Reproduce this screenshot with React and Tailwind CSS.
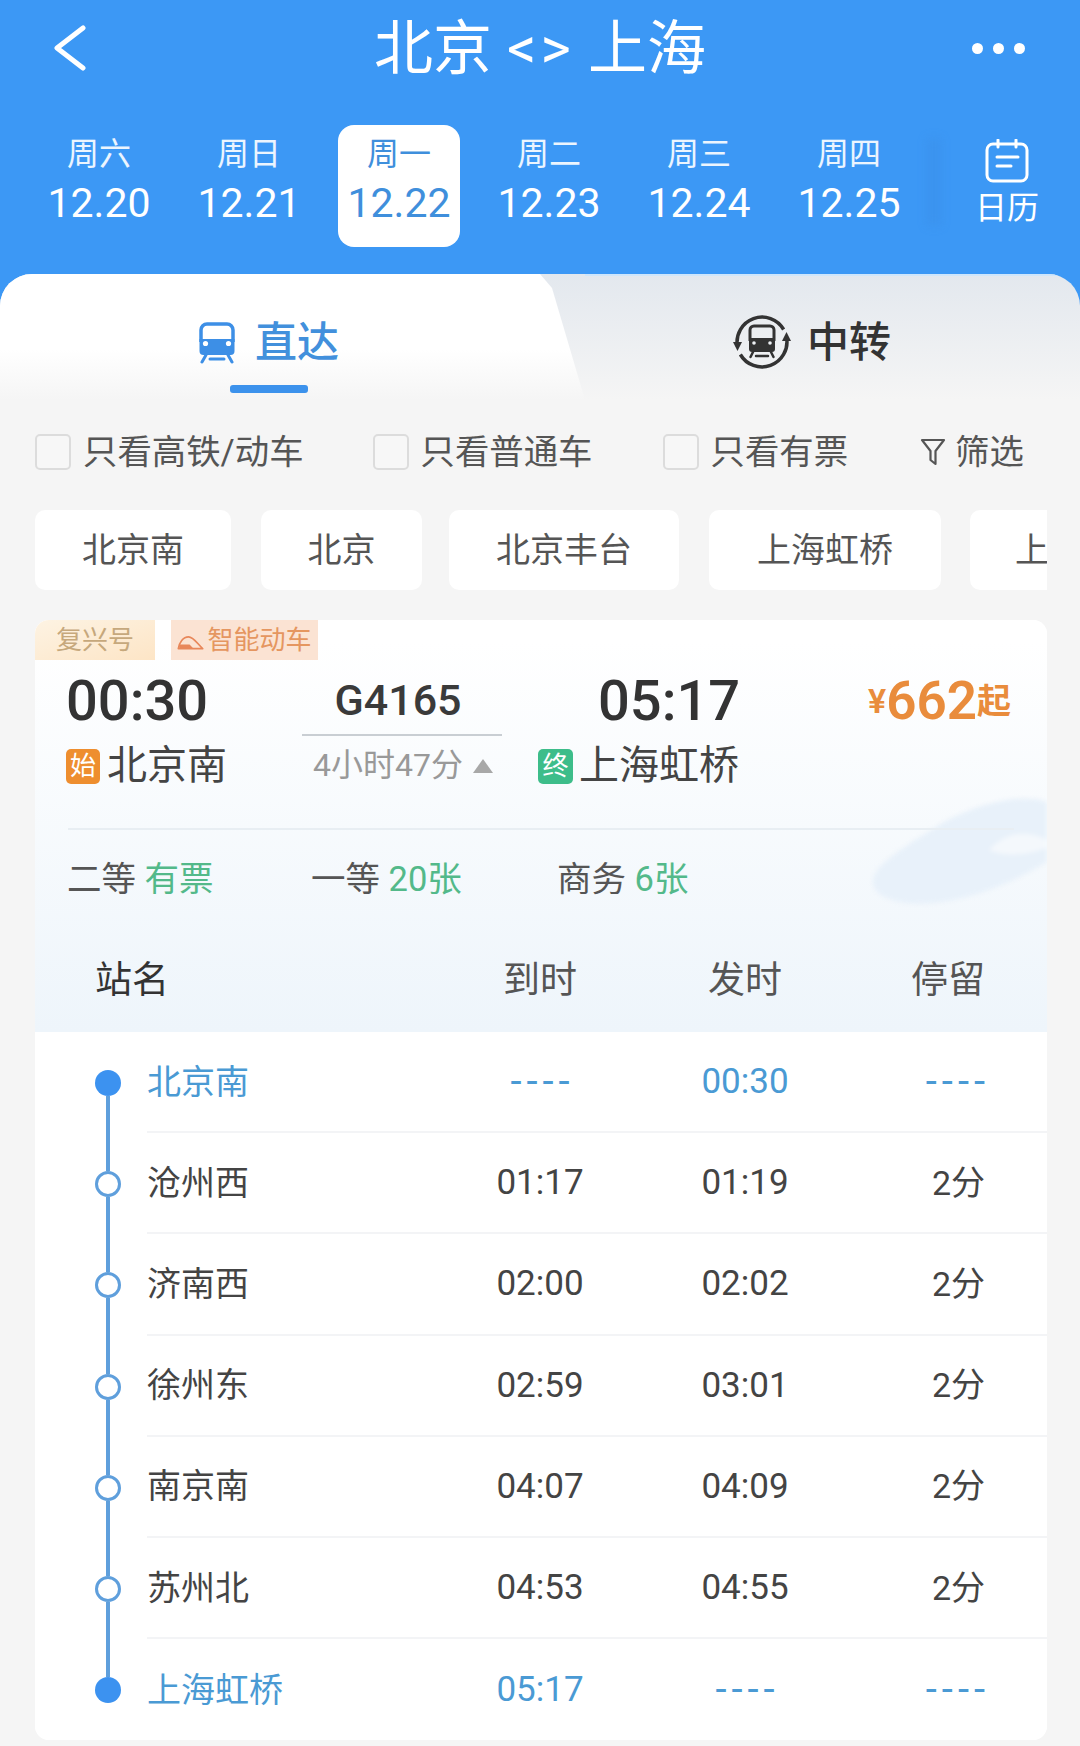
const days = [
  ['周六', '12.20'],
  ['周日', '12.21'],
  ['周一', '12.22', true],
  ['周二', '12.23'],
  ['周三', '12.24'],
  ['周四', '12.25'],
]

const stops = [
  { name: '北京南', arrive: '----', leave: '00:30', stay: '----', end: true },
  { name: '沧州西', arrive: '01:17', leave: '01:19', stay: '2分' },
  { name: '济南西', arrive: '02:00', leave: '02:02', stay: '2分' },
  { name: '徐州东', arrive: '02:59', leave: '03:01', stay: '2分' },
  { name: '南京南', arrive: '04:07', leave: '04:09', stay: '2分' },
  { name: '苏州北', arrive: '04:53', leave: '04:55', stay: '2分' },
  { name: '上海虹桥', arrive: '05:17', leave: '----', stay: '----', end: true },
]

function TrainIcon({ className, color }) {
  return (
    <svg viewBox="0 0 38 42" className={className} fill="none">
      <path d="M3 20V8a6 6 0 0 1 6-6h20a6 6 0 0 1 6 6v12" stroke={color} strokeWidth="3.5" />
      <path d="M1.5 17h35v12a4 4 0 0 1-4 4h-27a4 4 0 0 1-4-4z" fill={color} />
      <circle cx="7.5" cy="21.5" r="2.6" fill="#fff" />
      <circle cx="30.5" cy="21.5" r="2.6" fill="#fff" />
      <path d="M8 33l-4 7M30 33l4 7M12 37h14" stroke={color} strokeWidth="3" strokeLinecap="round" />
    </svg>
  )
}

function TransferIcon({ className }) {
  return (
    <svg viewBox="0 0 58 58" className={className} fill="none">
      <path d="M4.4 33.3A25 25 0 0 1 50.65 16.5" stroke="#333" strokeWidth="3.5" />
      <path d="M53.6 24.7A25 25 0 0 1 7.35 41.5" stroke="#333" strokeWidth="3.5" />
      <path d="M0 29h9l-4.5 9z" fill="#333" />
      <path d="M49 28h9l-4.5-9z" fill="#333" />
      <path d="M17 28V17a4 4 0 0 1 4-4h16a4 4 0 0 1 4 4v11" stroke="#333" strokeWidth="3" />
      <path d="M16 25h26v11a3 3 0 0 1-3 3H19a3 3 0 0 1-3-3z" fill="#333" />
      <circle cx="21" cy="30" r="1.8" fill="#eef1f5" />
      <circle cx="37" cy="30" r="1.8" fill="#eef1f5" />
      <path d="M20 39l-2.5 5M38 39l2.5 5M23 43h12" stroke="#333" strokeWidth="2.5" strokeLinecap="round" />
    </svg>
  )
}

function Dot({ filled, first, last }) {
  return (
    <div className="w-[26px] h-full shrink-0 flex flex-col items-center">
      <div className={`w-[4px] h-[38px] shrink-0 ${first ? 'bg-transparent' : 'bg-[#5f9fdc]'}`} />
      <div
        className={`w-[26px] h-[26px] shrink-0 rounded-full ${
          filled ? 'bg-[#3c92f0]' : 'bg-white border-[3px] border-[#5f9fdc]'
        }`}
      />
      <div className={`w-[4px] flex-1 ${last ? 'bg-transparent' : 'bg-[#5f9fdc]'}`} />
    </div>
  )
}

function Check({ className, children }) {
  return (
    <div className={`flex items-center ${className}`}>
      <div className="w-[36px] h-[36px] rounded-[5px] border-2 border-[#dcdcdc] bg-[#f7f7f7]" />
      <span className="ml-[12px] text-[34.4px] text-[#555]">{children}</span>
    </div>
  )
}

function Cell({ value, className }) {
  const dashes = value === '----'
  return <span className={`${className} ${dashes ? 'tracking-[5px] text-[40px]' : ''}`}>{value}</span>
}

export default function App() {
  return (
    <div className="w-[1080px] h-[1746px] overflow-hidden bg-[#f5f5f5] leading-none font-[Roboto,'Noto_Sans_CJK_SC',sans-serif]">
      {/* Blue header */}
      <div className="h-[307px] bg-[#3c98f5] text-white">
        <div className="h-[96px] flex items-center justify-between pl-[52px] pr-[55px]">
          <svg viewBox="0 0 34 46" className="w-[34px] h-[46px]" fill="none">
            <path d="M31 3L5 23l26 20" stroke="#fff" strokeWidth="5" strokeLinecap="round" strokeLinejoin="round" />
          </svg>
          <div className="flex items-center text-[59px] ml-[22px]">
            <span>北京</span>
            <span className="ml-[15px] mr-[13px] text-[58px] tracking-[4px]">&lt;&gt;</span>
            <span>上海</span>
          </div>
          <div className="flex gap-[10px]">
            <div className="w-[11px] h-[11px] rounded-full bg-white" />
            <div className="w-[11px] h-[11px] rounded-full bg-white" />
            <div className="w-[11px] h-[11px] rounded-full bg-white" />
          </div>
        </div>

        <div className="flex mt-[29px] pl-[24px]">
          {days.map(([week, date, active]) => (
            <div key={date} className="w-[150px] flex justify-center">
              <div
                className={`w-[122px] h-[122px] rounded-[16px] flex flex-col items-center pt-[13px] ${
                  active ? 'bg-white text-[#3f8fdc]' : ''
                }`}
              >
                <span className={`text-[32px] h-[32px] ${active ? 'text-[#3f8fdc]' : 'text-white/90'}`}>{week}</span>
                <span className="text-[41px] mt-[13px] whitespace-nowrap">{date}</span>
              </div>
            </div>
          ))}
          <div className="w-[12px] h-[86px] mt-[14px] ml-[4px] bg-[#3a90ea]/60 blur-[5px]" />
          <div className="flex flex-col items-center ml-[35px] pt-[14px]">
            <svg viewBox="0 0 44 44" className="w-[44px] h-[44px]" fill="none">
              <rect x="2" y="5" width="40" height="37" rx="6" stroke="#fff" strokeWidth="3" />
              <path d="M13 1v7M31 1v7" stroke="#fff" strokeWidth="3" strokeLinecap="round" />
              <path d="M12 18h21M12 27h14" stroke="#fff" strokeWidth="3" strokeLinecap="round" />
            </svg>
            <span className="text-[32px] mt-[9px] whitespace-nowrap">日历</span>
          </div>
        </div>
      </div>

      {/* Direct / transfer tabs */}
      <div className="-mt-[33px] h-[126px] flex rounded-t-[32px] overflow-hidden bg-gradient-to-b from-[#e3e8ee] to-[#f5f5f5]">
        <div className="w-[585px] shrink-0 flex flex-col items-center [clip-path:polygon(0_0,540px_0,552px_14px,585px_100%,0_100%)] bg-gradient-to-b from-white from-60% to-[#f5f5f5]">
          <div className="flex items-center mt-[48px] mr-[48px]">
            <TrainIcon className="w-[38px] h-[42px]" color="#3d8fe6" />
            <span className="ml-[19px] text-[42px] font-medium text-[#4290dc]">直达</span>
          </div>
          <div className="w-[78px] h-[8px] mt-[21px] mr-[47px] rounded-[3px] bg-[#3c92ec]" />
        </div>
        <div className="flex-1 flex items-start border-t-2 border-[#cfe6fb] pt-[37px] pl-[148px]">
          <TransferIcon className="w-[58px] h-[58px]" />
          <span className="ml-[16px] mt-[9px] text-[42px] font-medium text-[#333]">中转</span>
        </div>
      </div>

      {/* Filters */}
      <div className="h-[100px] flex items-center pl-[35px] pt-[4px]">
        <Check>只看高铁/动车</Check>
        <Check className="ml-[69px]">只看普通车</Check>
        <Check className="ml-[70px]">只看有票</Check>
        <svg viewBox="0 0 26 30" className="ml-[72px] w-[26px] h-[30px]" fill="none">
          <path d="M2 3h22l-8.5 11v13l-5-4v-9z" stroke="#555" strokeWidth="2.2" strokeLinejoin="round" />
        </svg>
        <span className="ml-[9px] text-[34.4px] text-[#555]">筛选</span>
      </div>

      {/* Station chips */}
      <div className="mt-[10px] ml-[35px] w-[1012px] h-[80px] flex overflow-hidden text-[34px] text-[#555]">
        <div className="w-[196px] shrink-0 rounded-[10px] bg-white flex items-center justify-center">北京南</div>
        <div className="ml-[30px] w-[161px] shrink-0 rounded-[10px] bg-white flex items-center justify-center">北京</div>
        <div className="ml-[27px] w-[230px] shrink-0 rounded-[10px] bg-white flex items-center justify-center">北京丰台</div>
        <div className="ml-[30px] w-[232px] shrink-0 rounded-[10px] bg-white flex items-center justify-center">上海虹桥</div>
        <div className="ml-[29px] w-[196px] shrink-0 rounded-[10px] bg-white flex items-center pl-[45px]">上</div>
      </div>

      {/* Train card */}
      <div className="relative mt-[30px] ml-[35px] w-[1012px] rounded-[14px] overflow-hidden bg-white">
        <div className="bg-gradient-to-b from-white from-5% to-[#eef5fb]">
          <svg viewBox="0 0 176 112" className="absolute right-0 top-[176px] w-[176px] h-[112px] blur-[2px]">
            <path d="M176 6C150-4 100 8 60 34 25 56 0 72 2 88c2 14 30 24 70 18 40-6 74-22 104-40z" fill="#e8f1fa" />
            <path d="M176 44c-22-12-44-6-58 10 18 8 40 4 58-2z" fill="#f4f8fc" />
          </svg>

          <div className="flex h-[40px]">
            <div className="w-[120px] rounded-tl-[10px] bg-gradient-to-br from-[#fdf3e3] to-[#fde5c6] text-[#c6a87c] text-[26px] flex items-center justify-center">
              复兴号
            </div>
            <div className="ml-[16px] w-[147px] bg-[#fbe3d3] text-[#e59660] text-[26px] flex items-center justify-center">
              <svg viewBox="0 0 28 16" className="w-[27px] h-[15px] mr-[3px] mt-[5px]" fill="none">
                <path d="M1 14.5C2 8 6 2 12 2c5 0 9 7 15 12.5z" stroke="#e8875a" strokeWidth="1.8" strokeLinejoin="round" />
                <path d="M2 10h11l4 4.5H2z" fill="#e8875a" />
              </svg>
              智能动车
            </div>
          </div>

          <div className="relative grid grid-cols-[236px_236px_329px_auto] pl-[31px]">
            <div className="h-[76px] flex items-center pt-[5px] text-[56px] font-medium text-[#333]">00:30</div>
            <div className="h-[76px] w-[200px] border-b-2 border-[#c9ced3] flex items-center justify-center pt-[6px] pr-[8px] text-[43px] font-medium text-[#3a3a3a]">
              G4165
            </div>
            <div className="h-[76px] flex items-center pt-[5px] pl-[60px] text-[56px] font-medium text-[#333]">05:17</div>
            <div className="h-[76px] flex items-center pt-[6px] pl-[1px] text-[#e98c3c] font-semibold">
              <span className="text-[34px]">¥</span>
              <span className="text-[53px]">662</span>
              <span className="text-[34px]">起</span>
            </div>

            <div className="h-[58px] flex items-center pt-[2px] text-[40px] text-[#444]">
              <span className="w-[34px] h-[35px] mr-[7px] rounded-[5px] bg-[#ee8e2f] text-white text-[26px] flex items-center justify-center">始</span>
              北京南
            </div>
            <div className="h-[58px] flex items-center pl-[11px] text-[32px] text-[#999]">
              4小时47分
              <div className="ml-[10px] mt-[2px] w-0 h-0 border-x-[10px] border-x-transparent border-b-[14px] border-b-[#a8a8a8]" />
            </div>
            <div className="h-[58px] flex items-center pt-[2px] text-[40px] text-[#444]">
              <span className="w-[35px] h-[35px] mr-[6px] rounded-[5px] bg-[#3dbd8a] text-white text-[26px] flex items-center justify-center">终</span>
              上海虹桥
            </div>
          </div>

          <div className="relative mt-[34px] mx-[33px] h-[2px] bg-[#e8eef3]" />

          <div className="relative h-[98px] flex items-center pl-[32px] text-[34.5px] text-[#555]">
            <span className="w-[244px]">
              二等 <span className="text-[#53b98a]">有票</span>
            </span>
            <span className="w-[246px]">
              一等 <span className="text-[#53b98a]">20张</span>
            </span>
            <span>
              商务 <span className="text-[#53b98a]">6张</span>
            </span>
          </div>

          <div className="relative h-[104px] grid grid-cols-[405px_200px_210px_1fr] items-center text-[37px] text-[#555]">
            <span className="pl-[60px] text-[#333]">站名</span>
            <span className="text-center">到时</span>
            <span className="text-center">发时</span>
            <span className="text-right pr-[62px]">停留</span>
          </div>
        </div>

        {/* Stops */}
        <div className="bg-white">
          {stops.map((stop, i) => (
            <div key={stop.name} className={`flex h-[101.2px] pl-[60px] ${stop.end ? 'text-[#4a9ad4]' : 'text-[#444]'}`}>
              <Dot filled={stop.end} first={i === 0} last={i === stops.length - 1} />
              <div
                className={`ml-[26px] flex-1 grid grid-cols-[293px_200px_210px_1fr] items-center text-[35px] ${
                  i < stops.length - 1 ? 'border-b-2 border-[#f3f4f6]' : ''
                }`}
              >
                <span className="text-[34px]">{stop.name}</span>
                <Cell value={stop.arrive} className={`text-center ${stop.arrive === '----' ? 'pl-[5px]' : ''}`} />
                <Cell value={stop.leave} className={`text-center ${stop.leave === '----' ? 'pl-[5px]' : ''}`} />
                <Cell value={stop.stay} className={`text-right ${stop.stay === '----' ? 'pr-[57px]' : 'pr-[62px] text-[34px]'}`} />
              </div>
            </div>
          ))}
        </div>
      </div>
    </div>
  )
}
